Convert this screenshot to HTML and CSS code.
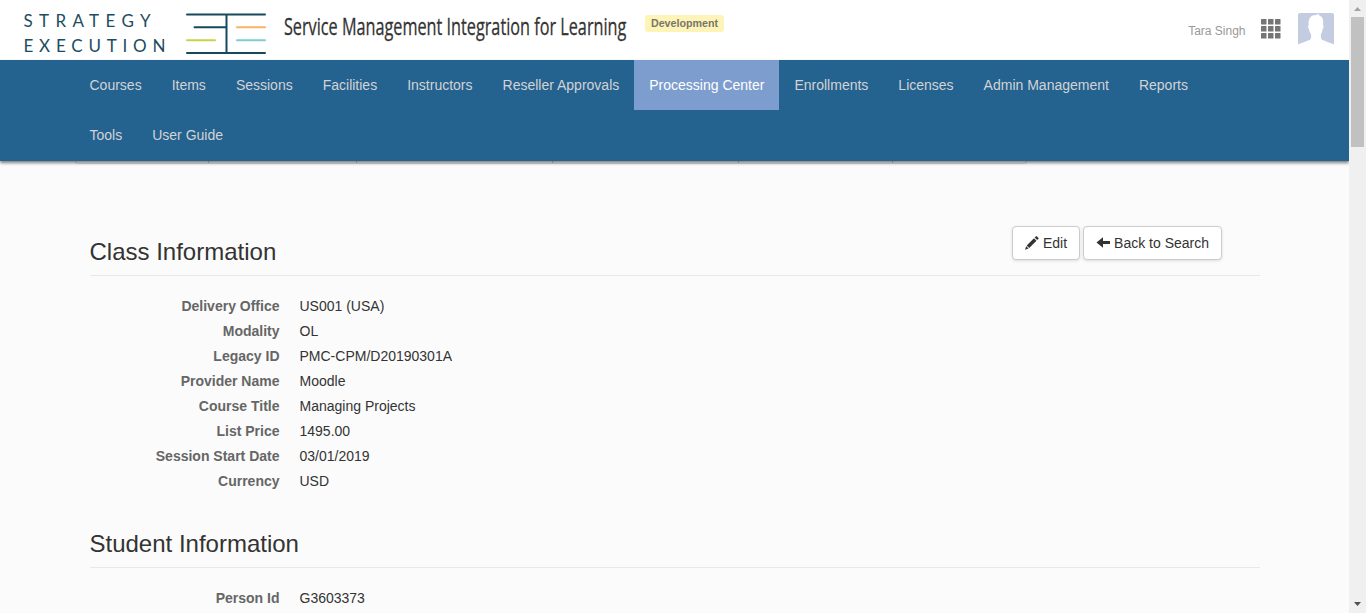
FILE: index.html
```html
<!DOCTYPE html>
<html lang="en">
<head>
<meta charset="utf-8">
<title>Service Management Integration for Learning</title>
<link rel="stylesheet" href="styles.css">
</head>
<body>
<div class="window">
  <div class="page">
    <header class="topbar">
      <svg class="logo" width="244" height="44" viewBox="0 0 244 44">
        <g class="logo-text">
          <text x="0.500" y="18.300" textLength="127">STRATEGY</text>
          <text x="0.500" y="43.300" textLength="142">EXECUTION</text>
        </g>
        <g fill="none" stroke-width="2" stroke-linecap="round">
          <path stroke="#154a5e" d="M164 5.400H242M164 44H242M171.500 18.200H203M203.500 5.400V44"/>
          <path stroke="#c9d14c" d="M164 31.300H192"/>
          <path stroke="#f7b563" d="M214 18.300H242"/>
          <path stroke="#7fcbd3" d="M214 31.300H242"/>
        </g>
      </svg>
      <svg class="app-title" width="344" height="40"><text transform="scale(.64 1)" x="1.500" y="25.500" textLength="535" lengthAdjust="spacingAndGlyphs">Service Management Integration for Learning</text></svg>
      <span class="env">Development</span>
      <span class="user">Tara Singh</span>
      <svg class="grid-icon" width="20" height="20" viewBox="0 0 20 20" fill="#757575">
        <rect x="0" y="0" width="5.500" height="5.500" rx=".5"/><rect x="7" y="0" width="5.500" height="5.500" rx=".5"/><rect x="14" y="0" width="5.500" height="5.500" rx=".5"/>
        <rect x="0" y="7" width="5.500" height="5.500" rx=".5"/><rect x="7" y="7" width="5.500" height="5.500" rx=".5"/><rect x="14" y="7" width="5.500" height="5.500" rx=".5"/>
        <rect x="0" y="14" width="5.500" height="5.500" rx=".5"/><rect x="7" y="14" width="5.500" height="5.500" rx=".5"/><rect x="14" y="14" width="5.500" height="5.500" rx=".5"/>
      </svg>
      <svg class="avatar" width="36" height="36" viewBox="0 0 36 36">
        <rect width="36" height="36" rx="2" fill="#c3cce1"/>
        <path fill="#fff" d="M0 36V31.500C6 29 12 27.500 13 25.500L13.200 21.500C11.800 20 11.300 18 11 16C10 15.500 9.800 12.500 10.700 12C10 5 13 2 18 2Q19.500 1.200 21 1C20.500 1.800 21 2 21.500 2.500C25 4 25.700 8 25 12C26 12.500 25.500 15.500 24.700 16C24.300 18 24 20 22.800 21.500L23 25.500C24 27.500 30 29 36 31.500V36Z"/>
      </svg>
    </header>
    <nav class="nav">
      <ul class="menu">
        <li>Courses</li><li>Items</li><li>Sessions</li><li>Facilities</li><li>Instructors</li><li>Reseller Approvals</li><li class="active">Processing Center</li><li>Enrollments</li><li>Licenses</li><li>Admin Management</li><li>Reports</li><li>Tools</li><li>User Guide</li>
      </ul>
    </nav>
    <div class="crumbs"><i class="c1"></i><i class="c2"></i><i class="c3"></i><i class="c4"></i><i class="c5"></i><i class="c6"></i></div>
    <main class="content">
      <section>
        <div class="head">
          <h3>Class Information</h3>
          <div class="actions">
            <button class="btn"><svg width="14" height="14" viewBox="0 0 14 14" fill="#333"><path d="M0 13.800L1.200 10.200L3.600 12.600ZM1.700 9.600L9 2.300L11.500 4.800L4.200 12.100ZM9.700 1.600L11 .3Q11.400 0 11.800.3L13.500 2Q13.800 2.400 13.500 2.800L12.200 4.100Z"/></svg>Edit</button>
            <button class="btn"><svg width="14" height="14" viewBox="0 0 14 14" fill="#333"><path d="M.5 6.500L7 1.200V4.900H14V8.100H7V11.800Z"/></svg>Back to Search</button>
          </div>
        </div>
        <dl>
          <dt>Delivery Office</dt><dd>US001 (USA)</dd>
          <dt>Modality</dt><dd>OL</dd>
          <dt>Legacy ID</dt><dd>PMC-CPM/D20190301A</dd>
          <dt>Provider Name</dt><dd>Moodle</dd>
          <dt>Course Title</dt><dd>Managing Projects</dd>
          <dt>List Price</dt><dd>1495.00</dd>
          <dt>Session Start Date</dt><dd>03/01/2019</dd>
          <dt>Currency</dt><dd>USD</dd>
        </dl>
      </section>
      <section>
        <div class="head"><h3>Student Information</h3></div>
        <dl><dt>Person Id</dt><dd>G3603373</dd></dl>
      </section>
    </main>
  </div>
  <div class="scrollbar">
    <svg width="17" height="17"><path fill="#a3a3a3" d="M5 11L8.500 7L12 11Z"/></svg>
    <div class="thumb"></div>
    <svg class="down" width="17" height="17"><path fill="#505050" d="M5 6L12 6L8.500 10Z"/></svg>
  </div>
</div>
</body>
</html>
```
FILE: styles.css
```css
* { box-sizing: border-box; }
body { margin: 0; height: 613px; overflow: hidden; background: #fbfbfb; color: #333; font: 14px/20px "Liberation Sans", Arial, sans-serif; }
.window { display: flex; height: 613px; }
.page { width: 1349px; height: 613px; overflow: hidden; }
.topbar { display: flex; align-items: flex-start; height: 60px; padding-left: 23px; background: #fff; }
.logo { margin-top: 9px; overflow: visible; }
.logo-text { font: 17px Lato, sans-serif; fill: #1c4c60; }
.app-title { margin: 9px 0 0 16px; overflow: visible; font: 24px "Open Sans", sans-serif; fill: #333; stroke: #333; stroke-width: .3px; }
.env { width: 79px; height: 17px; margin: 15px 0 0 18px; border-radius: 3px; background: #fef4b8; color: #77766b; font-size: 10.7px; font-weight: bold; line-height: 17px; text-align: center; }
.user { margin: 21px 15px 0 auto; color: #999; font-size: 12px; }
.grid-icon { margin-top: 19px; }
.avatar { margin: 13px 15px 0 17.5px; }
.nav { position: relative; height: 101px; padding-left: 74.5px; background: #246290; box-shadow: 0 2px 3px rgba(0, 0, 0, .5); }
.menu { display: flex; flex-wrap: wrap; width: 1170px; margin: 0; padding: 0; list-style: none; }
.menu li { height: 50px; padding: 15px; color: #d3d3d3; }
.menu .active { background: #7c9dcd; color: #fff; }
.crumbs { display: flex; width: 952px; height: 3px; margin-left: 75px; border: 1px solid #ddd; border-top: 0; border-radius: 0 0 4px 4px; }
.crumbs i { border-right: 1px solid #ccc; }
.c1 { width: 133px; } .c2 { width: 148px; } .c3 { width: 196px; } .c4 { width: 186px; } .c5 { width: 154px; } .crumbs .c6 { border: 0; }
.content { width: 1170px; margin-left: 90px; padding-top: 62px; }
.head { display: flex; justify-content: space-between; height: 50px; border-bottom: 1px solid #e8e8e8; }
h3 { margin: 13px 0 0 -.5px; font-size: 24px; font-weight: normal; line-height: 26px; }
.actions { display: flex; gap: 3px; margin-right: 38px; }
.btn { display: flex; align-items: center; gap: 4px; height: 34px; padding: 0 12px; border: 1px solid #ccc; border-radius: 4px; background: #fff; box-shadow: 0 1px 3px rgba(0, 0, 0, .12); color: #333; font: 14px/20px "Liberation Sans", Arial, sans-serif; }
dl { display: grid; grid-template-columns: 189.5px 1fr; column-gap: 20px; margin: 18px 0 24px; line-height: 25px; }
dt { color: #666; font-weight: bold; text-align: right; }
dd { margin: 0; }
.scrollbar { display: flex; flex-direction: column; width: 17px; background: #f0f0f0; }
.thumb { width: 13px; height: 130px; margin-left: 2px; background: #c1c1c1; }
.down { margin-top: auto; }
```
